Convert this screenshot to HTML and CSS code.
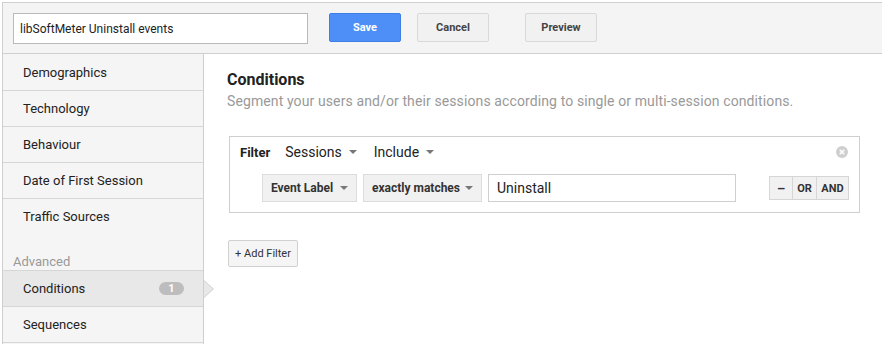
FILE: index.html
```html
<!DOCTYPE html>
<html>
<head>
<meta charset="utf-8">
<link rel="stylesheet" href="styles.css">
</head>
<body>
<div class="frame">
  <div class="topbar">
    <input class="name-input" type="text" value="libSoftMeter Uninstall events">
    <button class="btn btn-save">Save</button>
    <button class="btn btn-cancel">Cancel</button>
    <button class="btn btn-preview">Preview</button>
  </div>
  <div class="body">
    <nav class="sidebar">
      <div class="nav-item">Demographics</div>
      <div class="nav-item">Technology</div>
      <div class="nav-item">Behaviour</div>
      <div class="nav-item">Date of First Session</div>
      <div class="nav-item nav-last">Traffic Sources</div>
      <div class="nav-label">Advanced</div>
      <div class="nav-item nav-active"><span>Conditions</span><span class="badge">1</span></div>
      <div class="nav-item">Sequences</div>
    </nav>
    <main class="main">
      <h2 class="title">Conditions</h2>
      <p class="subtitle">Segment your users and/or their sessions according to single or multi-session conditions.</p>
      <div class="filter-box">
        <div class="filter-head">
          <span class="filter-word">Filter</span>
          <span class="drop-text">Sessions <i class="caret"></i></span>
          <span class="drop-text">Include <i class="caret"></i></span>
          <span class="close-icon">
            <svg width="12" height="12" viewBox="0 0 12 12"><circle cx="6" cy="6" r="6" fill="#cfcfcf"/><path d="M3.8 3.8 L8.2 8.2 M8.2 3.8 L3.8 8.2" stroke="#fff" stroke-width="1.5"/></svg>
          </span>
        </div>
        <div class="filter-row">
          <span class="select sel-label">Event Label <i class="caret"></i></span>
          <span class="select sel-match">exactly matches <i class="caret"></i></span>
          <input class="value-input" type="text" value="Uninstall">
          <div class="btn-group">
            <span class="gbtn g-minus">&#8211;</span>
            <span class="gbtn g-or">OR</span>
            <span class="gbtn g-and">AND</span>
          </div>
        </div>
      </div>
      <button class="add-filter">+ Add Filter</button>
    </main>
  </div>
</div>
</body>
</html>
```
FILE: styles.css
```css
* { box-sizing: border-box; }
html, body { margin: 0; padding: 0; background: #fff; }
body {
  font-family: Roboto, "Liberation Sans", Arial, sans-serif;
  color: #222;
  width: 882px;
  height: 344px;
  overflow: hidden;
}
.frame {
  margin: 2px 0 0 2px;
  border-top: 1px solid #cfcfcf;
  border-left: 1px solid #cfcfcf;
  height: 342px;
}
.topbar {
  height: 51px;
  background: #f4f4f4;
  border-bottom: 1px solid #cfcfcf;
  display: flex;
  align-items: flex-start;
  padding: 10px 0 0 10px;
}
.name-input {
  width: 295px;
  height: 31px;
  border: 1px solid #b9b9b9;
  background: #fff;
  font-family: Roboto, "Liberation Sans", Arial, sans-serif;
  font-size: 12px;
  color: #222;
  padding: 0 6px;
  margin: 0;
  outline: none;
}
.btn {
  height: 29px;
  width: 72px;
  font-family: Roboto, "Liberation Sans", Arial, sans-serif;
  font-size: 11px;
  font-weight: bold;
  border-radius: 2px;
  padding: 0;
  margin: 0;
}
.btn-save {
  margin-left: 21px;
  background: #4d8ff7;
  border: 1px solid #3e7fe6;
  color: #fff;
}
.btn-cancel, .btn-preview {
  background: #f1f1f1;
  border: 1px solid #d9d9d9;
  color: #444;
}
.btn-cancel { margin-left: 16px; }
.btn-preview { margin-left: 36px; }

.body {
  display: flex;
  height: 290px;
}
.sidebar {
  width: 201px;
  flex: none;
  background: #f5f5f5;
  border-right: 1px solid #cfcfcf;
  padding-top: 1px;
  font-size: 13px;
}
.nav-item {
  height: 36px;
  border-bottom: 1px solid #d6d6d6;
  padding-left: 20px;
  display: flex;
  align-items: center;
  color: #222;
}
.nav-last { border-bottom: none; height: 35px; }
.nav-label {
  padding: 21px 0 0 10px;
  line-height: 14px;
  height: 37px;
  color: #999;
  border-bottom: 1px solid #d6d6d6;
}
.nav-active {
  background: #e8e8e8;
  position: relative;
  justify-content: space-between;
  padding-right: 19px;
}
.nav-active::before {
  content: "";
  position: absolute;
  right: -11px;
  top: 9px;
  border-left: 10px solid #cfcfcf;
  border-top: 9px solid transparent;
  border-bottom: 9px solid transparent;
}
.nav-active::after {
  content: "";
  position: absolute;
  right: -10px;
  top: 10px;
  border-left: 9px solid #e8e8e8;
  border-top: 8px solid transparent;
  border-bottom: 8px solid transparent;
}
.badge {
  background: #bdbdbd;
  color: #fff;
  font-size: 11px;
  font-weight: bold;
  width: 25px;
  height: 13px;
  line-height: 13px;
  border-radius: 7px;
  text-align: center;
}

.main {
  flex: 1;
  padding: 16px 22px 0 23px;
}
.title {
  margin: 0;
  font-size: 16px;
  line-height: 20px;
  font-weight: bold;
  color: #222;
}
.subtitle {
  margin: 1px 0 0 0;
  font-size: 14px;
  line-height: 20px;
  letter-spacing: 0.11px;
  color: #999;
}
.filter-box {
  margin: 25px 0 0 2px;
  width: 631px;
  border: 1px solid #cfcfcf;
  padding: 5px 10px 10px 10px;
}
.filter-head {
  display: flex;
  align-items: center;
  height: 20px;
  font-size: 14px;
}
.filter-word {
  font-weight: bold;
  font-size: 13px;
  color: #222;
}
.drop-text {
  margin-left: 15px;
  color: #222;
  display: inline-flex;
  align-items: center;
}
.drop-text + .drop-text { margin-left: 17px; }
.caret {
  display: inline-block;
  width: 0;
  height: 0;
  border-left: 4px solid transparent;
  border-right: 4px solid transparent;
  border-top: 4px solid #777;
  margin-left: 7px;
}
.close-icon {
  margin-left: auto;
  margin-right: 1px;
  display: flex;
}
.filter-row {
  display: flex;
  align-items: center;
  margin: 12px 0 0 22px;
  height: 28px;
}
.select {
  height: 28px;
  background: #f1f1f1;
  border: 1px solid #dcdcdc;
  font-size: 12px;
  font-weight: bold;
  color: #333;
  display: flex;
  align-items: center;
  padding-left: 8px;
}
.select .caret { margin-left: auto; margin-right: 8px; }
.sel-label { width: 95px; }
.sel-match { width: 119px; margin-left: 6px; }
.value-input {
  margin: 0 0 0 6px;
  width: 248px;
  height: 28px;
  border: 1px solid #cfcfcf;
  font-family: Roboto, "Liberation Sans", Arial, sans-serif;
  font-size: 14px;
  color: #222;
  padding: 0 8px;
  outline: none;
}
.btn-group {
  margin-left: auto;
  display: flex;
  height: 24px;
}
.gbtn {
  height: 24px;
  background: #f1f1f1;
  border: 1px solid #d6d6d6;
  font-size: 11px;
  font-weight: bold;
  color: #333;
  display: flex;
  align-items: center;
  justify-content: center;
}
.gbtn + .gbtn { border-left: none; }
.g-minus { width: 24px; font-size: 13px; }
.g-or { width: 24px; }
.g-and { width: 32px; }
.add-filter {
  margin: 27px 0 0 1px;
  width: 70px;
  height: 27px;
  background: #f5f5f5;
  border: 1px solid #d0d0d0;
  border-radius: 2px;
  font-family: Roboto, "Liberation Sans", Arial, sans-serif;
  font-size: 11px;
  color: #333;
  padding: 0;
}
```
